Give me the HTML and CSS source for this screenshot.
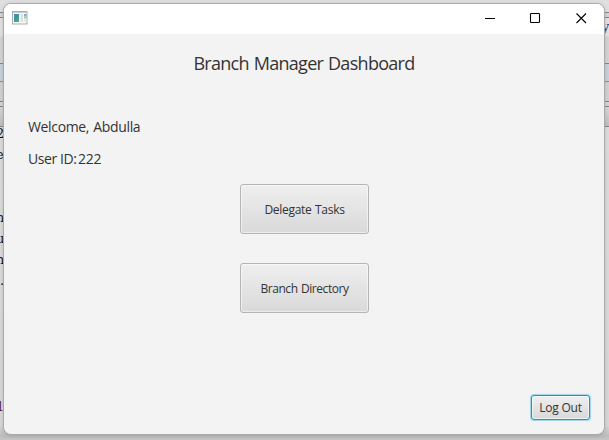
FILE: index.html
```html
<!DOCTYPE html>
<html lang="en">
<head>
<meta charset="utf-8">
<title>Branch Manager Dashboard</title>
<link rel="stylesheet" href="styles.css">
</head>
<body>
<div class="desktop">
  <div class="backdrop">
    <div class="band band-top"></div>
    <div class="band band-tabs"></div>
    <div class="band band-light"></div>
    <div class="band band-blue"></div>
    <div class="band band-gap"></div>
    <div class="band band-thin"></div>
    <div class="band band-header"></div>
  </div>
  <span class="code code-a">2</span>
  <span class="code code-b">e</span>
  <span class="code code-c">m</span>
  <span class="code code-d">u</span>
  <span class="code code-e">n</span>
  <span class="code code-f">.</span>
  <span class="code code-g">1</span>
  <span class="code code-h">y</span>
  <main class="window">
    <header class="titlebar">
      <svg class="app-icon" width="16" height="14" viewBox="0 0 16 14">
        <defs><linearGradient id="picture" x2="0.6" y2="1"><stop stop-color="#5a86c0"/><stop offset="0.5" stop-color="#3d93a0"/><stop offset="1" stop-color="#45b070"/></linearGradient></defs>
        <rect x="0.5" y="0.5" width="14.5" height="12.5" fill="#f8f8f8" stroke="#a9acb0"/>
        <path d="M1 1.5h14" stroke="#c9cbd0"/>
        <rect x="2" y="3" width="5" height="8" fill="url(#picture)"/>
        <rect x="8.5" y="3" width="2.5" height="8" fill="#dedede"/>
        <rect x="12" y="3" width="2.5" height="2.5" fill="#88aed5"/>
        <rect x="12" y="5.5" width="2.5" height="2" fill="#9bd0ad"/>
        <rect x="12" y="8" width="2.5" height="3" fill="#e8e8e8"/>
      </svg>
      <svg class="controls" width="104" height="12" viewBox="0 0 104 12" fill="none" stroke="#000">
        <path d="M0 6.5h10"/>
        <rect x="45.5" y="1.5" width="9" height="9" rx="0.8" stroke-width="1.1"/>
        <path d="M91.5 1.5l9.5 9.5M101 1.5l-9.5 9.5" stroke-width="1.1"/>
      </svg>
    </header>
    <section class="content">
      <h1 class="title">Branch Manager Dashboard</h1>
      <p class="line welcome">Welcome, Abdulla</p>
      <p class="line user"><span class="user-label">User ID:</span><span>222</span></p>
      <div class="actions">
        <button class="button delegate">Delegate Tasks</button>
        <button class="button directory">Branch Directory</button>
      </div>
      <footer class="footer"><button class="button logout">Log Out</button></footer>
    </section>
  </main>
</div>
</body>
</html>
```
FILE: styles.css
```css
* { box-sizing: border-box; }
body { margin: 0; font-family: "Open Sans", "Noto Sans", sans-serif; color: #333; }
.desktop {
  position: relative;
  width: 609px;
  height: 440px;
  padding: 3px 4px 5px 3px;
  overflow: hidden;
  background: linear-gradient(#dedede 0, #d8d8d8 425px, #bdbdbd 436px, #c6c6c6 440px);
}
.backdrop { position: absolute; inset: 0; display: flex; flex-direction: column; }
.band { border-bottom: 1px solid #85858d; flex: none; }
.band-top { height: 13px; background: #dfdfdf; }
.band-tabs { height: 5px; background: #d5d5d8; }
.band-light { height: 46px; background: linear-gradient(#e2e2e2 18px, #d4d4d4 19px); border-color: #7888a0; }
.band-blue { height: 18px; background: #c8d1de; border-color: #8790a0; }
.band-gap { height: 20px; background: #d2d2d2; }
.band-thin { height: 5px; background: #d5d5d5; }
.band-header { height: 20px; background: linear-gradient(#d8d8d8, #bfbfbf); }
.code { position: absolute; left: -6px; font: 13px/16px "DejaVu Serif", serif; color: #111; }
.code-a { top: 126px; left: -4px; }
.code-b { top: 147px; left: -4px; }
.code-c { top: 210px; left: -8px; }
.code-d { top: 231px; left: -4px; }
.code-e { top: 252px; left: -4px; }
.code-f { top: 273px; left: 0; }
.code-g { top: 399px; left: -4px; color: #601828; }
.code-h { top: 19px; left: 602px; color: #24438a; }
.window {
  position: relative;
  height: 432px;
  border: 1px solid #aaa;
  border-radius: 8px;
  background: #f3f3f3;
  overflow: hidden;
  box-shadow: 0 1px 4px rgba(0, 0, 0, .15);
}
.titlebar {
  height: 30px;
  padding: 0 15px 0 8px;
  display: flex;
  justify-content: space-between;
  align-items: center;
  background: #fff;
}
.app-icon { margin-top: -2px; }
.controls { margin-top: -2px; }
.content { height: 400px; display: flex; flex-direction: column; }
.title { margin: 17px 0 0; font-size: 18px; line-height: 25px; font-weight: 400; text-align: center; letter-spacing: -.7px; word-spacing: .8px; }
.line { margin: 0 0 0 24px; font-size: 14px; line-height: 20px; }
.welcome { margin-top: 41px; letter-spacing: -.35px; word-spacing: .9px; }
.user { display: flex; gap: 2px; margin-top: 12px; letter-spacing: -.4px; }
.user-label { width: 48px; white-space: nowrap; }
.user-label + span { letter-spacing: -.3px; }
.actions { display: flex; flex-direction: column; align-items: center; gap: 29px; margin-top: 15px; padding-left: 1px; }
.button {
  width: 129px;
  height: 50px;
  padding: 1px 0 0;
  border: 1px solid #b5b5b5;
  border-radius: 3px;
  background: linear-gradient(#efefef, #d9d9d9);
  box-shadow: inset 0 0 0 1px rgba(255, 255, 255, .5);
  color: #333;
  font: 12px/16px "Open Sans", "Noto Sans", sans-serif;
}
.delegate { letter-spacing: -.3px; word-spacing: .8px; }
.directory { letter-spacing: -.45px; word-spacing: .8px; }
.footer { display: flex; justify-content: flex-end; margin: auto 14px 14px 0; }
.logout {
  width: 59px;
  height: 25px;
  padding: 1px 0 0;
  border-color: #039ed3;
  box-shadow: 0 0 1px 1px rgba(3, 158, 211, .35), inset 0 0 0 1px rgba(255, 255, 255, .6);
  letter-spacing: -.2px;
}
```
